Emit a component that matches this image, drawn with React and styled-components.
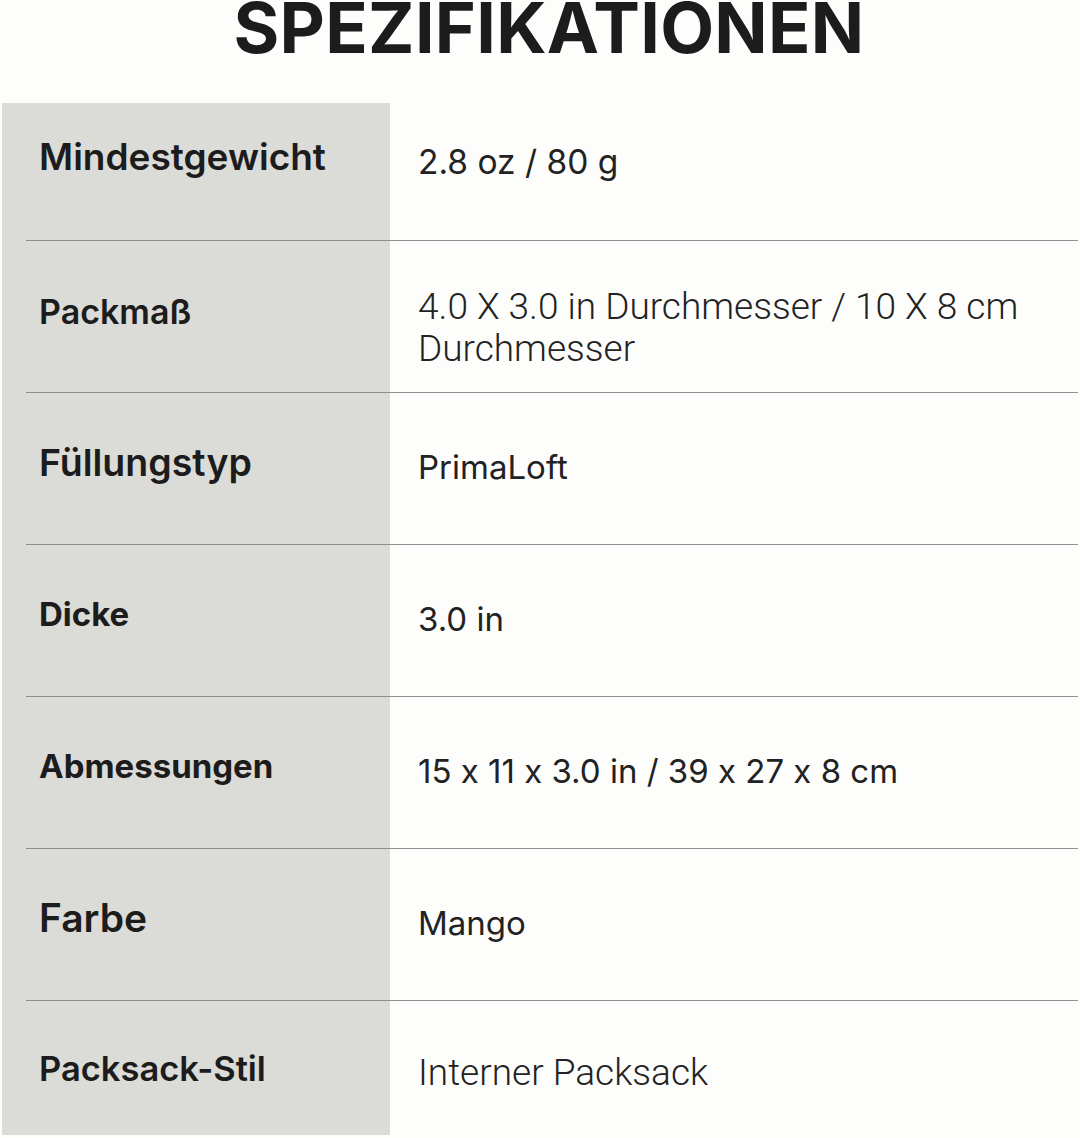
import styled, { createGlobalStyle } from "styled-components";

const GlobalStyle = createGlobalStyle`
  html, body {
    margin: 0;
    padding: 0;
    background: #fdfdfc;
  }
  body {
    font-family: Inter, "Liberation Sans", sans-serif;
    color: #1d1d1d;
  }
`;

const Page = styled.div`
  width: 1080px;
  height: 1138px;
  overflow: hidden;
  background: #fdfdfc;
`;

const Header = styled.div`
  height: 103px;
  display: flex;
  justify-content: center;
  align-items: flex-start;
  padding-left: 18px;
  box-sizing: border-box;
`;

const Title = styled.h1`
  margin: -7px 0 0 0;
  font-family: Inter, "Liberation Sans", sans-serif;
  font-weight: 700;
  font-size: 70px;
  line-height: 1;
  letter-spacing: 0.3px;
  color: #1b1c1b;
`;

const Table = styled.div`
  display: flex;
  flex-direction: column;
  background: linear-gradient(
    to right,
    transparent 0 2px,
    #dbdbd7 2px 390px,
    #fdfdfc 390px 100%
  );
`;

const Row = styled.div`
  flex-shrink: 0;
  display: grid;
  grid-template-columns: 364px 1fr;
  align-items: center;
  margin: 0 2px 0 26px;
  height: ${({ $first, $last }) => ($first ? "138px" : $last ? "134px" : "152px")};
  padding-bottom: ${({ $first }) => ($first ? "28px" : "12px")};
  box-sizing: border-box;
  border-bottom: ${({ $last }) => ($last ? "none" : "1.5px solid #8f8f8f")};
`;

const Label = styled.div`
  padding: ${({ $offset }) => $offset || "0"} 0 0 13px;
  font-family: Inter, "Liberation Sans", sans-serif;
  font-weight: ${({ $weight }) => $weight || 600};
  font-size: ${({ $size }) => $size || "34px"};
  line-height: 1.2;
  color: #1c1c1c;
`;

const Value = styled.div`
  padding: ${({ $offset }) => $offset || "10px"} 0 0 28px;
  font-family: ${({ $font }) => $font || "Inter, 'Liberation Sans', sans-serif"};
  font-weight: ${({ $weight }) => $weight || 400};
  font-size: ${({ $size }) => $size || "33px"};
  line-height: ${({ $lh }) => $lh || 1.3};
  font-feature-settings: "calt" 0;
  color: #222;
`;

const specs = [
  { label: "Mindestgewicht", labelSize: "37px", value: "2.8 oz / 80 g", size: "33.5px" },
  {
    label: "Packmaß",
    labelSize: "34px",
    labelOffset: "3px",
    value: "4.0 X 3.0 in Durchmesser / 10 X 8 cm Durchmesser",
    font: "Roboto, 'Liberation Sans', sans-serif",
    weight: 300,
    size: "37px",
    lh: "42px",
    offset: "34px",
  },
  { label: "Füllungstyp", labelSize: "37.5px", value: "PrimaLoft" },
  { label: "Dicke", labelSize: "33px", labelWeight: 700, value: "3.0 in" },
  { label: "Abmessungen", labelSize: "33px", labelWeight: 700, value: "15 x 11 x 3.0 in / 39 x 27 x 8 cm" },
  { label: "Farbe", labelSize: "39px", value: "Mango" },
  {
    label: "Packsack-Stil",
    labelSize: "34.5px",
    labelOffset: "14px",
    value: "Interner Packsack",
    font: "Roboto, 'Liberation Sans', sans-serif",
    weight: 300,
    size: "37px",
    offset: "22px",
  },
];

const App = () => {
  return (
    <Page>
      <GlobalStyle />
      <Header>
        <Title>SPEZIFIKATIONEN</Title>
      </Header>
      <Table>
        {specs.map((s, i) => (
          <Row key={s.label} $first={i === 0} $last={i === specs.length - 1}>
            <Label $size={s.labelSize} $weight={s.labelWeight} $offset={s.labelOffset}>
              {s.label}
            </Label>
            <Value
              $font={s.font}
              $weight={s.weight}
              $size={s.size}
              $lh={s.lh}
              $offset={s.offset}
            >
              {s.value}
            </Value>
          </Row>
        ))}
      </Table>
    </Page>
  );
};

export default App;
